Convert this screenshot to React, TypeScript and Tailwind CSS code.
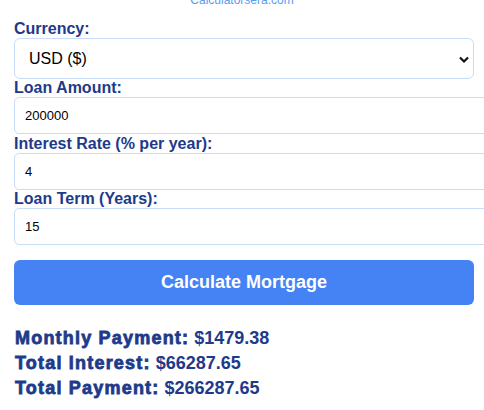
import React from "react";

export default function App() {
  const font = { fontFamily: '"Liberation Sans", Arial, sans-serif' };
  const heavy = { WebkitTextStroke: "0.8px #1e3a8a" };
  return (
    <div className="w-[484px] h-[410px] overflow-hidden bg-white relative" style={font}>
      <div className="absolute top-[-7px] left-0 w-full text-center text-[12px] leading-[14px] text-[#5b9cf2]">
        Calculatorsera.com
      </div>
      <div className="pl-[14px] pt-[20px]">
        <div className="text-[16px] leading-[18px] font-bold text-[#1e3a8a]">Currency:</div>
        <div className="w-[460px] h-[41px] border border-[#c7ddf8] rounded-[6px] flex items-center justify-between pl-[14px] pr-[3px]">
          <span className="text-[16px] text-black">USD ($)</span>
          <svg width="12" height="10" viewBox="0 0 12 10">
            <path d="M2 3.5 L6 7.5 L10 3.5" stroke="#111" strokeWidth="2.2" fill="none" />
          </svg>
        </div>
        <div className="text-[16px] leading-[18px] font-bold text-[#1e3a8a]">Loan Amount:</div>
        <div className="w-[480px] h-[37px] border border-[#c7ddf8] rounded-[5px] flex items-center pl-[10px] text-[13px] text-black">200000</div>
        <div className="text-[16px] leading-[18px] font-bold text-[#1e3a8a] mt-[1px]">Interest Rate (% per year):</div>
        <div className="w-[480px] h-[37px] border border-[#c7ddf8] rounded-[5px] flex items-center pl-[10px] text-[13px] text-black">4</div>
        <div className="text-[16px] leading-[18px] font-bold text-[#1e3a8a]">Loan Term (Years):</div>
        <div className="w-[480px] h-[37px] border border-[#c7ddf8] rounded-[5px] flex items-center pl-[10px] text-[13px] text-black">15</div>
        <div className="mt-[15px] w-[460px] h-[45px] bg-[#4583f5] rounded-[6px] flex items-center justify-center text-white font-bold text-[18px]">
          Calculate Mortgage
        </div>
        <div className="mt-[21px] pl-[1px] text-[18px] leading-[25px] font-bold text-[#1e3a8a]">
          <div><span className="tracking-[1.2px]" style={heavy}>Monthly Payment:</span> $1479.38</div>
          <div><span className="tracking-[1.2px]" style={heavy}>Total Interest:</span> $66287.65</div>
          <div><span className="tracking-[1.2px]" style={heavy}>Total Payment:</span> $266287.65</div>
        </div>
      </div>
    </div>
  );
}
